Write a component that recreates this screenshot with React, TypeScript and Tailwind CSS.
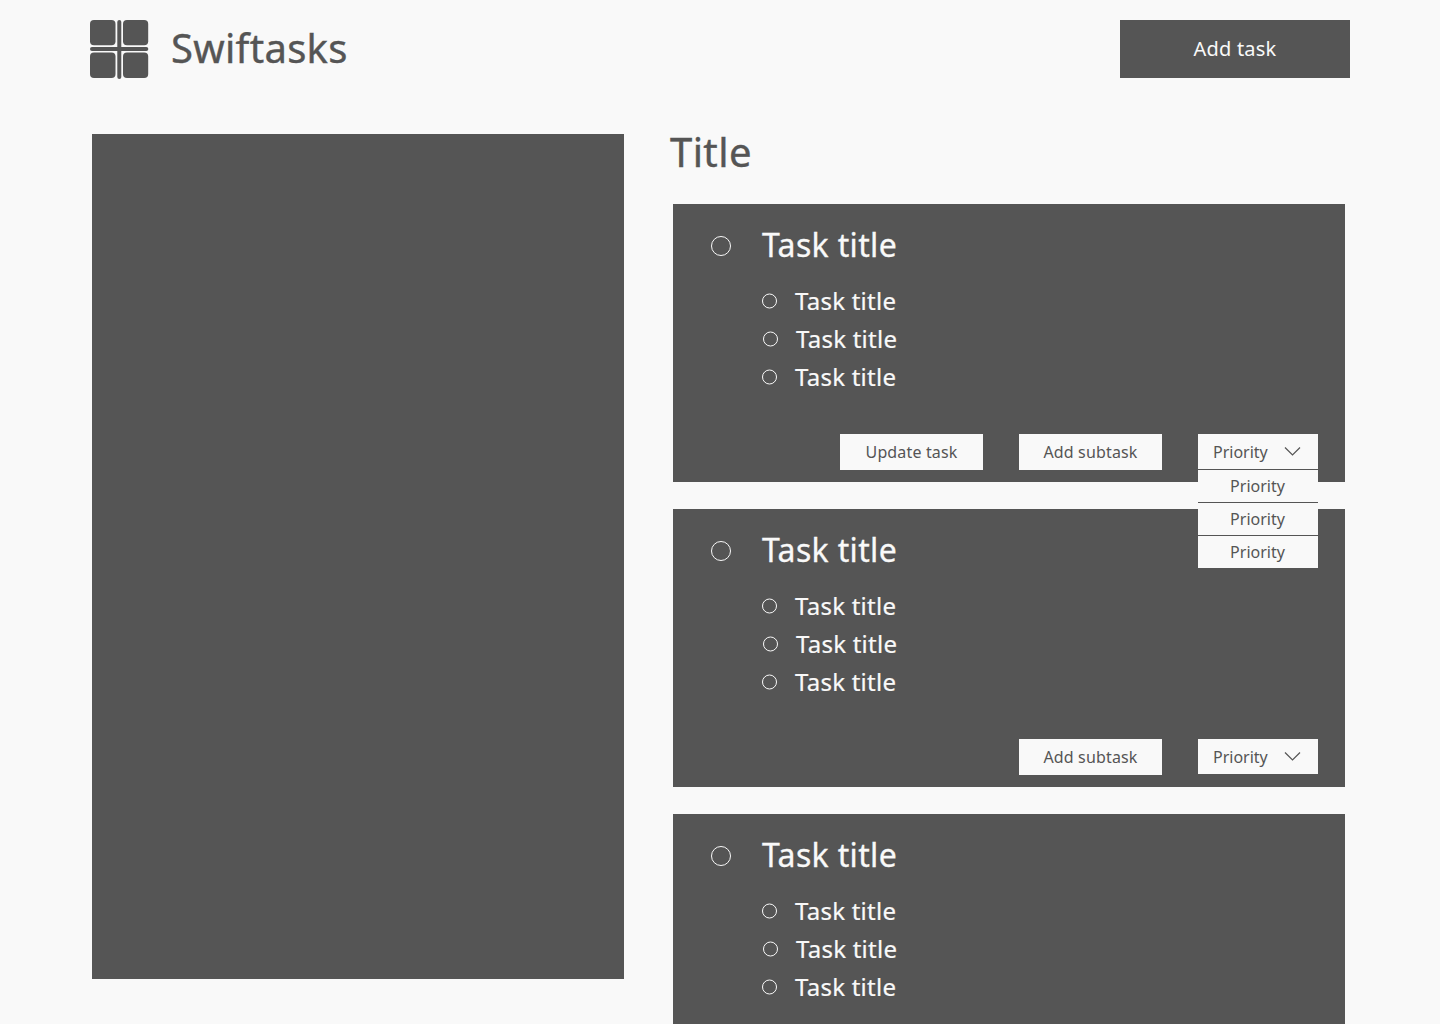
import React from "react";

type Task = { subtasks: string[]; canUpdate?: boolean; menuOpen?: boolean; showActions?: boolean };

const subtasks = ["Task title", "Task title", "Task title"];
const tasks: Task[] = [
  { subtasks, canUpdate: true, menuOpen: true, showActions: true },
  { subtasks, showActions: true },
  { subtasks },
];
const priorities = ["Priority", "Priority", "Priority"];

function Logo() {
  return (
    <svg width="60" height="60" viewBox="0 0 60 60" fill="#555555" className="shrink-0">
      <rect x="0" y="0" width="25.5" height="25.3" rx="4" />
      <rect x="33" y="0" width="25.2" height="25.3" rx="4" />
      <rect x="0" y="32.6" width="25.5" height="25.4" rx="4" />
      <rect x="33" y="32.6" width="25.2" height="25.4" rx="4" />
      <rect x="27.3" y="0" width="4" height="59" rx="2" />
      <rect x="0" y="27" width="58.3" height="4" rx="2" />
    </svg>
  );
}

function Ring({ size, dy = 0 }: { size: number; dy?: number }) {
  return (
    <svg
      width={size}
      height={size}
      viewBox={`0 0 ${size} ${size}`}
      fill="none"
      stroke="#f9f9f9"
      className="shrink-0 overflow-visible"
    >
      <circle cx={size / 2} cy={size / 2 + dy} r={size / 2 - 0.5} />
    </svg>
  );
}

function ActionButton({ children }: { children: React.ReactNode }) {
  return (
    <button className="h-9 w-[143px] bg-[#f9f9f9] text-base leading-9 tracking-[0.15px] text-[#555555]">{children}</button>
  );
}

function PrioritySelect({ open }: { open?: boolean }) {
  return (
    <div className="relative h-[35px] w-[120px] bg-[#f9f9f9] text-base text-[#555555]">
      <button className="flex h-[35px] w-full items-center pl-[15px]">
        <span className="w-[55px] pt-px text-left leading-9 whitespace-nowrap">Priority</span>
        <svg width="18" height="12" viewBox="0 0 18 12" fill="none" stroke="#555555" strokeWidth="1.2" className="ml-4">
          <path d="M1 1.5 L8.5 9 L16 1.5" />
        </svg>
      </button>
      {open && (
        <ul className="absolute top-[35px] left-0 z-10 w-[120px] bg-[#f9f9f9]">
          {priorities.map((label, i) => (
            <li key={i} className="h-[33px] border-t border-[#555555] pr-px text-center leading-8">
              {label}
            </li>
          ))}
        </ul>
      )}
    </div>
  );
}

function TaskCard({ task }: { task: Task }) {
  return (
    <article className="flex h-[278px] shrink-0 flex-col bg-[#555555] pt-[22px] pr-[27px] pl-[38px] text-[#f9f9f9]">
      <div className="flex h-10 items-center gap-[31px]">
        <Ring size={20} />
        <h2 className="h-10 text-[32px] leading-[38px] tracking-[0.35px] whitespace-nowrap [-webkit-text-stroke:0.3px_#f9f9f9]">
          Task title
        </h2>
      </div>
      <ul className="mt-[15.5px] pl-[51px]">
        {task.subtasks.map((title, i) => (
          <li key={i} className={`flex h-[38px] items-center gap-[18px] ${i === 1 ? "pl-px" : ""}`}>
            <Ring size={15} dy={0.5} />
            <span className="h-[38px] text-2xl leading-[37px] tracking-[0.25px] whitespace-nowrap [-webkit-text-stroke:0.2px_#f9f9f9]">
              {title}
            </span>
          </li>
        ))}
      </ul>
      {task.showActions && (
        <div className="mt-[38.5px] flex justify-end gap-9">
          {task.canUpdate && <ActionButton>Update task</ActionButton>}
          <ActionButton>Add subtask</ActionButton>
          <PrioritySelect open={task.menuOpen} />
        </div>
      )}
    </article>
  );
}

export default function App() {
  return (
    <div className="h-[1024px] w-[1440px] overflow-hidden bg-[#f9f9f9] font-['Noto_Sans',sans-serif] text-[#555555]">
      <header className="flex h-[98px] items-start justify-between px-[90px] pt-5">
        <div className="flex gap-[21px]">
          <Logo />
          <span className="text-[40px] leading-[55px] tracking-[0.3px] [-webkit-text-stroke:0.4px_#555555]">Swiftasks</span>
        </div>
        <button className="h-[58px] w-[230px] bg-[#555555] text-xl leading-[56px] tracking-[0.2px] text-[#f9f9f9]">
          Add task
        </button>
      </header>
      <main className="flex gap-[49px] pt-9 pl-[92px]">
        <aside className="h-[845px] w-[532px] shrink-0 bg-[#555555]" />
        <section className="flex w-[672px] flex-col">
          <h1 className="-ml-[3px] h-[70px] text-[40px] leading-[36px] tracking-[0.4px] [-webkit-text-stroke:0.4px_#555555]">
            Title
          </h1>
          <div className="flex flex-col gap-[27px]">
            {tasks.map((task, i) => (
              <TaskCard key={i} task={task} />
            ))}
          </div>
        </section>
      </main>
    </div>
  );
}
